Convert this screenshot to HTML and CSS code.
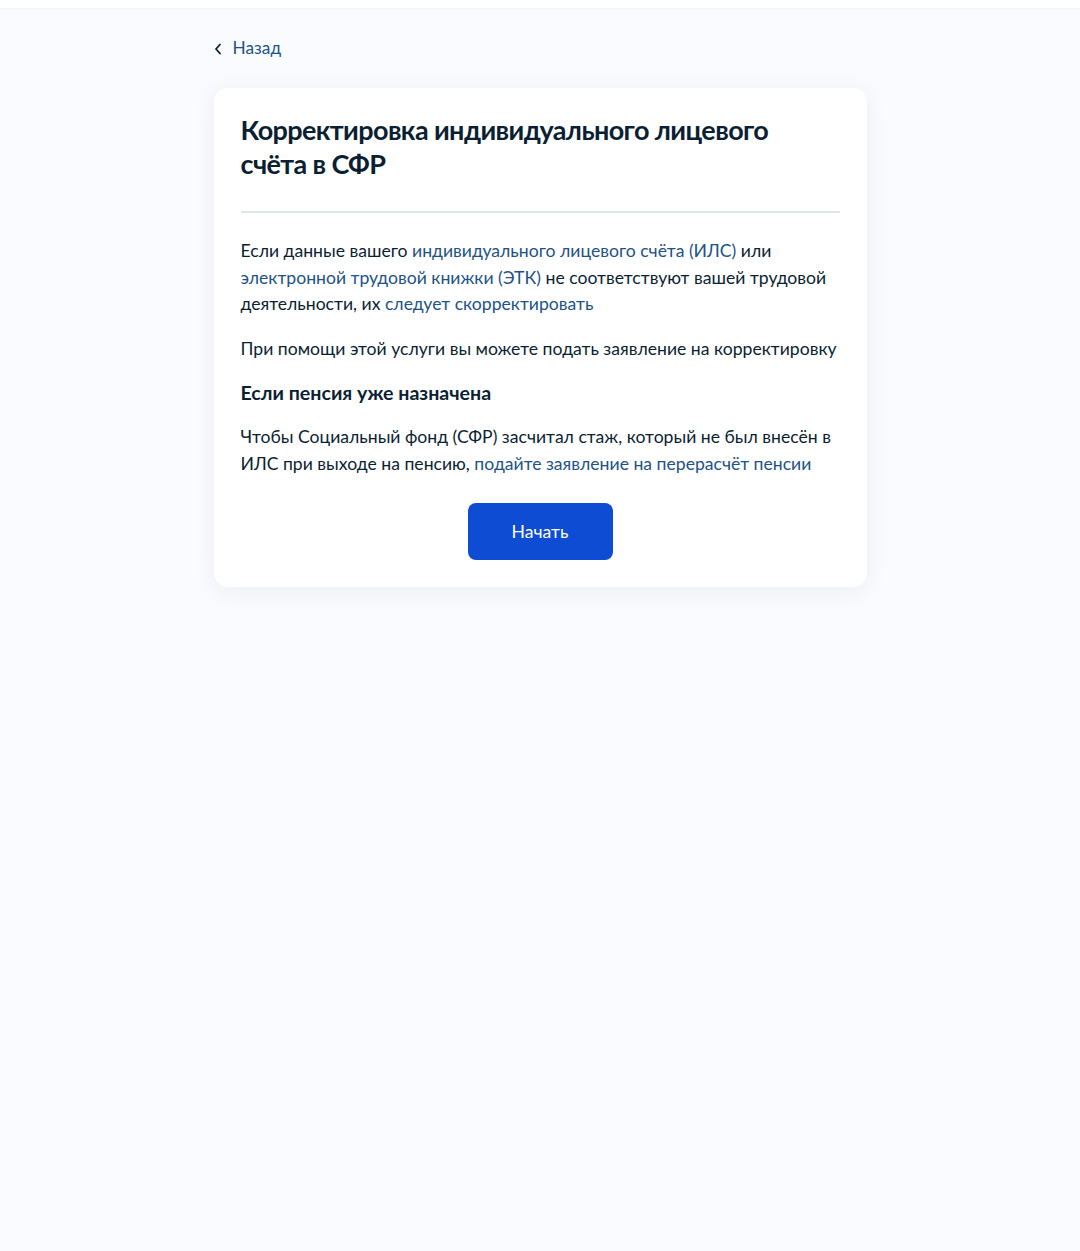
FILE: index.html
```html
<!DOCTYPE html>
<html lang="ru">
<head>
<meta charset="utf-8">
<title>Корректировка ИЛС</title>
<link rel="stylesheet" href="styles.css">
</head>
<body>
<div class="topbar"></div>
<main class="container">
  <a class="back" href="#">
    <svg class="back-icon" width="8" height="12" viewBox="0 0 8 12"><path d="M6 1.5 L2 6 L6 10.5" fill="none" stroke="#0b1f33" stroke-width="1.8" stroke-linecap="round" stroke-linejoin="round"/></svg>
    <span>Назад</span>
  </a>
  <section class="card">
    <h1 class="title">Корректировка индивидуального лицевого счёта в СФР</h1>
    <hr class="divider">
    <p class="text"><span>Если данные вашего</span> <a href="#" class="link">индивидуального лицевого счёта (ИЛС)</a> <span>или</span> <a href="#" class="link">электронной трудовой книжки (ЭТК)</a> <span>не соответствуют вашей трудовой</span> <span>деятельности, их</span> <a href="#" class="link">следует скорректировать</a></p>
    <p class="text">При помощи этой услуги вы можете подать заявление на корректировку</p>
    <h2 class="subtitle">Если пенсия уже назначена</h2>
    <p class="text"><span>Чтобы Социальный фонд (СФР) засчитал стаж, который не был внесён в</span> <span>ИЛС при выходе на пенсию,</span> <a href="#" class="link">подайте заявление на перерасчёт пенсии</a></p>
    <div class="actions">
      <button class="btn">Начать</button>
    </div>
  </section>
</main>
</body>
</html>
```
FILE: styles.css
```css
* { box-sizing: border-box; }
html, body { margin: 0; padding: 0; }
body {
  background: #f9fbfe;
  font-family: Lato, "Noto Sans", sans-serif;
  color: #0b1f33;
  min-height: 1251px;
}
.topbar {
  height: 8px;
  background: #ffffff;
  box-shadow: 0 1px 3px rgba(11, 31, 51, 0.04);
}
.container {
  width: 653px;
  margin: 0 auto;
  padding-top: 29px;
}
.back {
  display: inline-flex;
  align-items: center;
  gap: 11px;
  text-decoration: none;
  color: #1d5387;
  font-size: 17.3px;
  line-height: 22px;
  height: 22px;
}
.back-icon { display: block; margin-top: 1px; }
.card {
  margin-top: 29px;
  background: #ffffff;
  border-radius: 14px;
  box-shadow: 0 4px 24px rgba(11, 31, 51, 0.06);
  padding: 25px 27px 27px 27px;
}
.title {
  margin: 0;
  font-size: 27px;
  line-height: 34px;
  font-weight: 700;
  letter-spacing: -0.6px;
  color: #0b1f33;
}
.divider {
  border: 0;
  height: 2px;
  background: #dfe4ea;
  margin: 30px 0 25px;
}
.text {
  margin: 0 0 18px;
  font-size: 17.6px;
  line-height: 26.5px;
}
.link {
  color: #1d5387;
  text-decoration: none;
}
.subtitle {
  margin: 0 0 18px;
  font-size: 19.6px;
  line-height: 26px;
  font-weight: 700;
}
.actions {
  display: flex;
  justify-content: center;
  padding-top: 8px;
}
.btn {
  width: 145px;
  height: 57px;
  border: 0;
  border-radius: 8px;
  background: #0d4cd3;
  color: #ffffff;
  font-family: Lato, "Noto Sans", sans-serif;
  font-size: 17.6px;
  cursor: pointer;
}
```
